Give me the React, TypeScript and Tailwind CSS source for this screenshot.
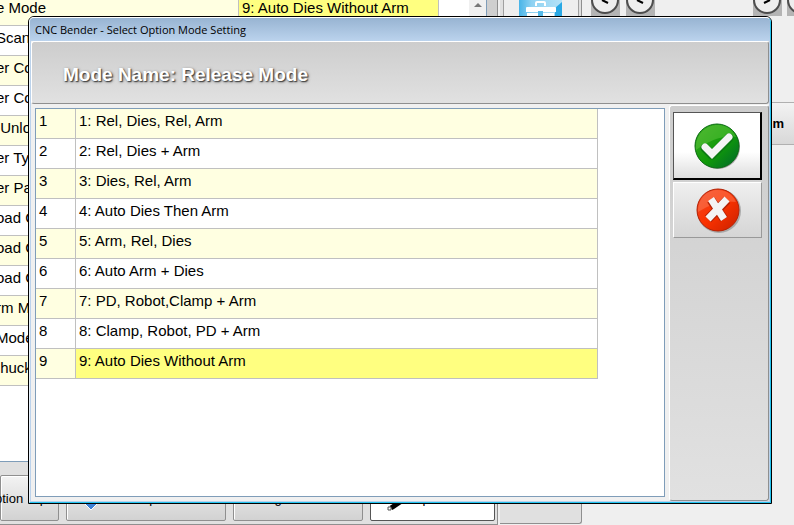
import React, { useState } from 'react'

const modes = [
  'Rel, Dies, Rel, Arm',
  'Rel, Dies + Arm',
  'Dies, Rel, Arm',
  'Auto Dies Then Arm',
  'Arm, Rel, Dies',
  'Auto Arm + Dies',
  'PD, Robot,Clamp + Arm',
  'Clamp, Robot, PD + Arm',
  'Auto Dies Without Arm',
]

const options = ['Scan', 'er Co', 'er Co', ' Unlo', 'er Ty', 'er Pa', 'oad C', 'oad C', 'oad C', 'rm M', 'Mode', ' huck']

function AcceptIcon() {
  return (
    <svg width="48" height="48" viewBox="0 0 48 48" aria-hidden="true">
      <defs>
        <linearGradient id="green" x1="0" y1="0" x2="1" y2="1">
          <stop offset="0" stopColor="#3aa822" />
          <stop offset="0.55" stopColor="#109a08" />
          <stop offset="1" stopColor="#00652f" />
        </linearGradient>
      </defs>
      <circle cx="25" cy="25" r="22" fill="#666" opacity="0.6" />
      <circle cx="24" cy="24" r="22" fill="url(#green)" stroke="#0a6b12" />
      <path d="M3 28C2 13 12 3 25 3c9 0 15 5 18 12C30 13 17 18 3 28Z" fill="#6fd048" opacity="0.4" />
      <path d="M12 26l7 7 17-17" fill="none" stroke="#0b7a12" strokeWidth="9" strokeLinecap="round" strokeLinejoin="round" />
      <path d="M12 25l7 7 17-17" fill="none" stroke="#f4f4f4" strokeWidth="7" strokeLinecap="round" strokeLinejoin="miter" />
    </svg>
  )
}

function CancelIcon() {
  return (
    <svg width="48" height="48" viewBox="0 0 48 48" aria-hidden="true">
      <defs>
        <linearGradient id="red" x1="0" y1="0" x2="1" y2="1">
          <stop offset="0" stopColor="#ef4a28" />
          <stop offset="0.5" stopColor="#fa3200" />
          <stop offset="1" stopColor="#c92000" />
        </linearGradient>
      </defs>
      <circle cx="25" cy="25" r="22" fill="#777" opacity="0.5" />
      <circle cx="24" cy="24" r="21" fill="url(#red)" stroke="#b52205" />
      <path d="M4 26C4 12 13 4 24 4c9 0 15 5 18 12C29 14 17 18 4 26Z" fill="#ff9a78" opacity="0.35" />
      <path d="M17 14l13 19M33 14L14 33" fill="none" stroke="#b52205" strokeWidth="9" />
      <path d="M17 13l13 20M33 13L14 33" fill="none" stroke="#f4f4f4" strokeWidth="7" />
    </svg>
  )
}

function Toolbox() {
  return (
    <svg width="43" height="16" viewBox="0 0 43 16" aria-hidden="true">
      <defs>
        <linearGradient id="sky" x1="0" y1="0" x2="1" y2="0">
          <stop offset="0" stopColor="#48b4e8" />
          <stop offset="0.3" stopColor="#8fd2f2" />
          <stop offset="1" stopColor="#b5e2f7" />
        </linearGradient>
      </defs>
      <rect width="43" height="16" fill="url(#sky)" />
      <path d="M43 2v14h-7V8Z" fill="#2aa8e4" />
      <path d="M17 6V3q0-1 1-1h7q1 0 1 1v3" fill="none" stroke="#fff" strokeWidth="2" />
      <path d="M7 8q0-1 1-1h28q1 0 1 1v4H7ZM8 13h27v3H8Z" fill="#fff" />
      <rect x="19" y="11" width="5" height="5" fill="#55b9e8" />
    </svg>
  )
}

function Dial({ back }: { back?: boolean }) {
  return (
    <button aria-label={back ? 'Back' : 'Forward'} className="h-4 w-[29px] shrink-0 overflow-hidden bg-[#b4b4b4]">
      <svg width="29" height="16" viewBox="0 0 29 16" aria-hidden="true">
        <circle cx="14" cy="0" r="13" fill="#eee" stroke="#4d4d4d" strokeWidth="2" />
        <path d={back ? 'M11 0l6 3' : 'M17 0l-6 3'} fill="none" stroke="#000" strokeWidth="2" />
      </svg>
    </button>
  )
}

const barButton = 'flex items-end rounded-[2px] border border-[#8f8f8f] bg-linear-to-b from-[#f3f3f3] to-[#d2d2d2] pb-[13px] text-[13px] leading-4 whitespace-pre shadow-[inset_1px_1px_0_#fff]'

function Background() {
  return (
    <div className="flex h-full bg-[#efefef]">
      <div className="flex w-[498px] shrink-0 flex-col border-r border-[#8f8f8f] bg-[#e0e0e0]">
        <div className="flex min-h-0 flex-1 border-b border-[#7f9db9] bg-white">
          <div className="w-[439px]">
            <div className="flex h-[26px] border-b border-[#c0c0c0] bg-[#ffffe1] text-[15px] leading-4 whitespace-nowrap">
              <div className="w-[239px] border-r border-[#c0c0c0] -indent-1">e Mode</div>
              <div className="flex-1 border-r border-[#c0c0c0] bg-[#ffff80] pl-[3px]">9: Auto Dies Without Arm</div>
            </div>
            {options.map((o, i) => (
              <div key={i} className="h-[30px] border-b border-[#c0c0c0] pt-[3px] -indent-1 text-[15px] leading-[18px] whitespace-pre odd:bg-[#ffffe1]">{o}</div>
            ))}
          </div>
          <div className="ml-auto flex w-[18px] justify-center border-r border-[#7f9db9] bg-[#f0f0f0] pt-[3px]">
            <svg width="8" height="4" viewBox="0 0 8 4" aria-hidden="true"><path d="M0 4l4-4 4 4Z" fill="#777" /></svg>
          </div>
          <div className="w-[10px] bg-[#cfcfcf]" />
        </div>
        <div className="flex h-[63px] gap-[7px] border-b border-[#8f8f8f] pt-[13px] pb-[3px]">
          <button className={`${barButton} w-[59px] -indent-[6px]`}>ption  Up</button>
          <button className={`${barButton} w-[160px] gap-[14px] pl-4`}>
            <svg width="16" height="16" viewBox="0 0 16 16" aria-hidden="true" className="-mb-1"><path d="M8 1l7 7-7 7-7-7Z" fill="#3f83d6" stroke="#fff" /></svg>
            Backup
          </button>
          <button className={`${barButton} w-[130px] pl-[26px]`}>Log</button>
          <button className={`${barButton} w-[125px] gap-2 border-[#555] from-white to-white pl-4`}>
            <svg width="18" height="16" viewBox="0 0 18 16" aria-hidden="true" className="-mb-1"><path d="M4 13L16 5" stroke="#000" strokeWidth="5" /><path d="M1 12h3v3H1Z" fill="#fff" stroke="#555" /></svg>
            Up
          </button>
        </div>
      </div>
      <div className="ml-[2px] mb-px flex w-[82px] shrink-0 justify-center rounded-br-[3px] border-r border-b border-[#8f8f8f] bg-[#e0e0e0]">
        <button aria-label="Tools" className="flex h-[60px] w-[76px] justify-center border-x border-[#a0a0a0] bg-[#eee]"><Toolbox /></button>
      </div>
      <div className="flex min-w-0 flex-1 flex-col overflow-hidden">
        <div className="flex justify-between pl-[9px]">
          <div className="flex gap-[6px]"><Dial back /><Dial back /></div>
          <div className="-mr-[22px] flex gap-[5px]"><Dial /><Dial /></div>
        </div>
        <button className="mt-[86px] h-[43px] w-full border-y border-[#b0b0b0] bg-linear-to-b from-[#f3f3f3] to-[#d8d8d8] pr-[10px] text-right text-[13px] font-bold">m</button>
      </div>
    </div>
  )
}

export default function App() {
  const [selected, setSelected] = useState(8)

  return (
    <div className="relative h-screen overflow-hidden font-['Liberation_Sans',Arial,sans-serif] text-black">
      <Background />
      <div role="dialog" aria-labelledby="title" className="absolute top-4 right-[22px] bottom-[21px] left-7 flex flex-col rounded-t-[6px] border border-black bg-[#f0f0f0]">
        <div className="flex min-h-0 flex-1 flex-col rounded-t-[5px] border border-t-white border-r-[#22c4f0] border-b-[#22c4f0] border-l-[#e8f2fc] bg-[#bbd2eb]">
          <div id="title" className="h-[23px] rounded-t-[4px] bg-linear-to-b from-[#98b4d2] to-[#bbd3ed] pl-[5px] font-['Open_Sans','Noto_Sans',sans-serif] text-[11px] leading-[23px]">CNC Bender - Select Option Mode Setting</div>
          <div className="mx-px mb-px flex min-h-0 flex-1 flex-col bg-[#f0f0f0]">
            <header className="h-[63px] rounded-[3px] border border-t-white border-r-[#8f8f8f] border-b-[#8f8f8f] border-l-white bg-linear-to-b from-[#cdcdcd] to-[#e1e1e1] pl-[31px]">
              <h1 className="text-[19px] leading-[66px] font-bold text-white [text-shadow:1px_1px_1px_#444,1px_1px_3px_#666]">Mode Name: Release Mode</h1>
            </header>
            <div className="flex min-h-0 flex-1">
              <div className="mt-1 mb-1 ml-1 flex-1 border border-[#7f9db9] bg-white">
                <table className="w-[562px] table-fixed border-separate border-spacing-0 text-[15px] leading-[18px]">
                  <colgroup>
                    <col className="w-10" />
                    <col />
                  </colgroup>
                  <tbody>
                    {modes.map((m, i) => (
                      <tr key={m} onClick={() => setSelected(i)} className="h-[30px] align-top odd:bg-[#ffffe1]">
                        <td className="border-r border-b border-[#c0c0c0] pt-[3px] pl-[3px]">{i + 1}</td>
                        <td className={`border-r border-b border-[#c0c0c0] pt-[3px] pl-[3px] ${i === selected ? 'bg-[#ffff80]' : ''}`}>{i + 1}: {m}</td>
                      </tr>
                    ))}
                  </tbody>
                </table>
              </div>
              <div className="mt-px ml-1 flex w-[100px] flex-col gap-[2px] rounded-[3px] border border-t-white border-r-[#8f8f8f] border-b-[#8f8f8f] border-l-white bg-linear-to-b from-[#cdcdcd] to-[#e1e1e1] pt-[6px] pr-[6px] pl-[3px]">
                <button aria-label="Accept" className="flex h-[68px] items-center justify-center border border-t-[#555] border-r-2 border-b-2 border-l-[#555] border-black bg-linear-to-b from-white from-60% to-[#dedede]"><AcceptIcon /></button>
                <button aria-label="Cancel" className="flex h-[56px] items-center justify-center border border-t-white border-r-[#999] border-b-[#999] border-l-white bg-linear-to-b from-[#efefef] to-[#d5d5d5]"><CancelIcon /></button>
              </div>
            </div>
          </div>
        </div>
      </div>
    </div>
  )
}
